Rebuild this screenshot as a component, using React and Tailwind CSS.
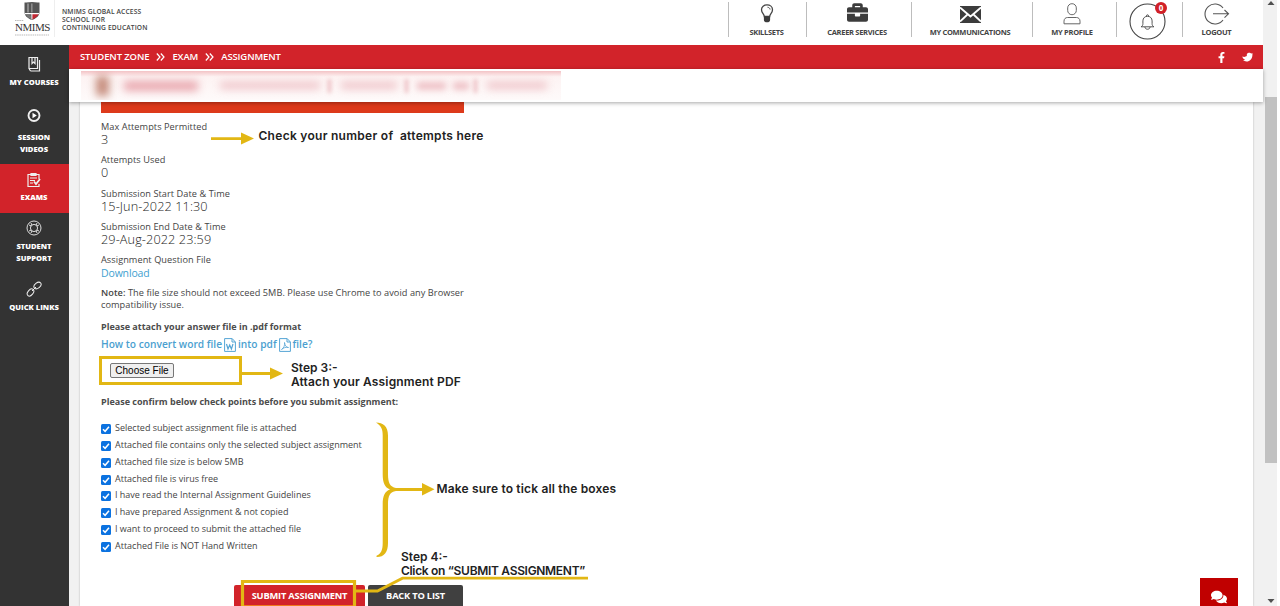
import React from "react";
import { FaBriefcase, FaFacebookF, FaComments } from "react-icons/fa";

const sans = "font-['Open_Sans','Liberation_Sans',sans-serif]";

function Crest() {
  return (
    <svg width="38" height="37" viewBox="0 0 38 37" className="block">
      <path d="M10.5 2.5c2.4.3 4.700-.1 7.500-.4 2.800.3 5 .7 7.500.4v9.500c0 4-3.500 6.500-7.500 8-4-1.500-7.500-4-7.500-8z" fill="#555" />
      <path d="M13 3.500h2v9h-2zM17 3.500h1.600v9H17z" fill="#8b8b8b" />
      <path d="M18 14h6.500c-.8 2.500-3.300 4.300-6.500 5.400z" fill="#c22732" />
      <path d="M11 13h14v1.200H11zM17.400 13h1v6.500h-1z" fill="#fff" />
      <path d="M12 14.500l5 1v3.500c-2.500-1-4.300-2.500-5-4.500z" fill="#777" />
      <path d="M1 20.500h9" stroke="#bbb" strokeWidth="1" strokeDasharray="1.500 .7" />
      <path d="M1 35h34" stroke="#bbb" strokeWidth="1" strokeDasharray="1.500 .7" />
    </svg>
  );
}

function BulbIcon() {
  return (
    <svg width="14" height="19" viewBox="0 0 14 19" fill="none">
      <path d="M4.300 12.500C4.300 10 1.500 9 1.500 5.700 1.500 2.800 4 .9 7 .9s5.500 1.900 5.500 4.800c0 3.300-2.800 4.300-2.800 6.800z" stroke="#444" strokeWidth="1.300" />
      <path d="M7.500 3.200c1.500.2 2.400 1 2.600 2.300" stroke="#444" strokeWidth="1" />
      <path d="M3.900 12.500h6.200v3.400c0 1.200-1.300 2.400-3.100 2.400s-3.100-1.200-3.100-2.400z" fill="#3c3c3c" />
    </svg>
  );
}

function MailIcon() {
  return (
    <svg width="21" height="17" viewBox="0 0 21 17" className="mt-[2px]">
      <path d="M0 0h21v17H0z" fill="#3c3c3c" />
      <path d="M0 1.500l10.500 9L21 1.500M0 15.500l7.500-7M21 15.500l-7.500-7" stroke="#fff" strokeWidth="1.800" fill="none" />
    </svg>
  );
}

function PersonIcon() {
  return (
    <svg width="18" height="22" viewBox="0 0 18 22" fill="none" stroke="#666" strokeWidth="1">
      <rect x="4.700" y=".7" width="8.600" height="11" rx="4.200" />
      <path d="M1 20.800v-2.600c0-2.400 1.600-3.700 3.600-3.700h8.800c2 0 3.600 1.300 3.600 3.700v2.600z" />
    </svg>
  );
}

function BellIcon() {
  return (
    <svg width="38" height="38" viewBox="0 0 38 38" fill="none" stroke="#555" strokeWidth="1">
      <circle cx="18.500" cy="19.500" r="17.500" stroke="#444" strokeWidth="1.100" />
      <path d="M12 24.800c1.500-.8 1.900-1.600 1.900-3.300v-2.600c0-2.800 1.900-4.600 4.600-4.600s4.600 1.800 4.600 4.600v2.600c0 1.700.4 2.500 1.900 3.300zM17.300 14.300c0-2 2.400-2 2.400 0M15.900 25c.3 3 4.900 3 5.200 0" />
    </svg>
  );
}

function LogoutIcon() {
  return (
    <svg width="26" height="22" viewBox="0 0 26 22" fill="none" stroke="#555" strokeWidth="1.100">
      <path d="M19 5A10 10 0 1 0 19 17M9 10.800h15.500M20.500 7l4 3.800-4 3.800" />
    </svg>
  );
}

function NavItem({ label, className, children }) {
  return (
    <div className={"flex h-[35px] shrink-0 flex-col items-center border-l border-[#bdbdbd] " + className}>
      <div className="flex h-[23px] shrink-0 items-center justify-center">{children}</div>
      <div className="shrink-0 whitespace-nowrap text-[7.500px] font-bold leading-[15px] tracking-[-0.300px] text-[#444]">{label}</div>
    </div>
  );
}

function Header() {
  return (
    <header className="flex h-[45px] shrink-0 justify-between bg-white">
      <div className="flex">
        <div className="relative ml-[14px] h-[37px] w-[41px] border-r border-[#eee]">
          <Crest />
          <span className="absolute left-[1px] top-[20px] font-['Liberation_Serif',serif] text-[11px] leading-[14px] tracking-[-0.500px] text-[#333]">NMIMS</span>
        </div>
        <div className="ml-[7px] mt-[8px] whitespace-nowrap text-[6.700px] font-semibold leading-[8.100px] tracking-[0.120px] text-[#444]">
          NMIMS GLOBAL ACCESS<br />SCHOOL FOR<br />CONTINUING EDUCATION
        </div>
      </div>
      <nav className="mt-[2px] flex">
        <NavItem label="SKILLSETS" className="w-[78px] pr-[2px]"><BulbIcon /></NavItem>
        <NavItem label="CAREER SERVICES" className="w-[105px] pr-[4px]"><FaBriefcase className="mb-[2px] h-[21px] w-[21px] text-[#3c3c3c]" /></NavItem>
        <NavItem label="MY COMMUNICATIONS" className="w-[121px] pr-[4px]"><MailIcon /></NavItem>
        <NavItem label="MY PROFILE" className="w-[84px] pr-[5px]"><PersonIcon /></NavItem>
        <div className="relative h-[35px] w-[66px] border-l border-[#bdbdbd] pl-[12px]">
          <BellIcon />
          <span className="absolute left-[38px] top-[0px] flex h-[12px] w-[12px] items-center justify-center rounded-full bg-[#d12027] text-[8px] font-bold leading-none text-white">0</span>
        </div>
        <NavItem label="LOGOUT" className="w-[81px] pr-[13px]"><LogoutIcon /></NavItem>
      </nav>
    </header>
  );
}

const stroke = { fill: "none", stroke: "#eee", strokeWidth: 1.2 };

function SideItem({ icon, lines, className }) {
  return (
    <div className={"flex flex-col items-center pr-[1px] " + className}>
      <svg width="16" height="16" viewBox="0 0 16 16" {...stroke}>{icon}</svg>
      <div className="whitespace-nowrap text-center text-[7.600px] font-extrabold leading-[11.500px] text-white">
        {lines.map((l) => <div key={l}>{l}</div>)}
      </div>
    </div>
  );
}

function Sidebar() {
  return (
    <aside className="flex w-[69px] shrink-0 flex-col bg-[#333]">
      <SideItem className="h-[60px] gap-[5px] pt-[11px]" lines={["MY COURSES"]} icon={<><path d="M3 1.500h8.500v11H3zM4.500 15h9V4M3 12.500L4.500 15" /><path d="M6 1.500v6l1.500-1.500L9 7.500v-6" /></>} />
      <SideItem className="h-[59px] gap-[9px] pt-[2px]" lines={["SESSION", "VIDEOS"]} icon={<><circle cx="8" cy="8.500" r="5.500" strokeWidth="1.900" /><path d="M6.500 5.700l4.300 2.800-4.300 2.800z" fill="#fff" stroke="none" /></>} />
      <SideItem className="h-[48.500px] gap-[4px] bg-[#d2232a] pt-[8px]" lines={["EXAMS"]} icon={<><path d="M13 7V2.500H2v12h11V12M5 1.500h5v2H5zM4 6h7M4 8.500h5M4 11h3" /><path d="M8 9.500l2 2.500 4-5" strokeWidth="1.800" /></>} />
      <SideItem className="h-[60px] gap-[5px] pt-[7.500px]" lines={["STUDENT", "SUPPORT"]} icon={<><circle cx="8" cy="8" r="7" strokeWidth=".9" /><circle cx="8" cy="8" r="3.600" strokeWidth=".9" /><path d="M3 5l2.200 1M5 3l1 2.200M13 5l-2.200 1M11 3l-1 2.200M3 11l2.200-1M5 13l1-2.200M13 11l-2.200-1M11 13l-1-2.200" strokeWidth=".9" /></>} />
      <SideItem className="gap-[5px] pt-[8.500px]" lines={["QUICK LINKS"]} icon={<g strokeWidth="1"><ellipse cx="11.500" cy="4.500" rx="4" ry="2.600" transform="rotate(-38 11.500 4.500)" /><ellipse cx="4.500" cy="11.500" rx="4" ry="2.600" transform="rotate(-50 4.500 11.500)" /><path d="M6 10l4-4" /></g>} />
    </aside>
  );
}

function Chevrons() {
  return (
    <svg width="9" height="8" viewBox="0 0 9 8" fill="none" stroke="#fff" strokeWidth="1.200">
      <path d="M.8.500L4 4 .8 7.500M4.800.500L8 4 4.800 7.500" />
    </svg>
  );
}

function Breadcrumbs() {
  return (
    <div className="flex h-[24px] shrink-0 items-center justify-between bg-[#d2232a] pl-[11px] pr-[10px] text-[9.500px] font-semibold text-white">
      <div className="flex items-center gap-[7px] whitespace-nowrap tracking-[-0.120px]">
        <span>STUDENT ZONE</span><Chevrons /><span>EXAM</span><Chevrons /><span>ASSIGNMENT</span>
      </div>
      <div className="flex items-center gap-[17px]">
        <FaFacebookF className="h-[11px] w-[7px]" />
        <svg width="11" height="10" viewBox="0 0 12 10" fill="#fff">
          <path d="M.3 4.500c2 .8 3.800.3 5-.5-.5-2 .5-3.500 2.200-3.700 1.300-.1 2 .4 2.400.8l1.600-.3-.2 2.700C10.900 7 8.600 9.800 5 9.800c-1.800 0-3-.5-3.800-1.300 1 0 1.500-.2 2-.6C1.700 7.300.7 6.200.3 4.500z" />
        </svg>
      </div>
    </div>
  );
}

function ProfileStrip() {
  return (
    <div className="z-10 flex h-[33px] shrink-0 bg-white pl-[12px] pt-[2px] shadow-[0_1px_4px_rgba(0,0,0,0.35)]">
      <div className="flex h-[29px] w-[480px] items-center overflow-hidden bg-linear-to-b from-[#f3c3c6] from-0% via-[#fdf3f3] via-20% to-[#fefafa]">
        <div className="ml-[15px] h-[20px] w-[13px] bg-[#b8735f] opacity-80 blur-[4px]" />
        <div className="ml-[15px] h-[10px] w-[74px] bg-[#dc7480] opacity-60 blur-[4px]" />
        <div className="ml-[22px] h-[7px] w-[100px] bg-[#e5a0a8] opacity-60 blur-[4px]" />
        <div className="ml-[8px] h-[14px] w-[3px] bg-[#dc8890] opacity-60 blur-[2px]" />
        <div className="ml-[10px] h-[7px] w-[56px] bg-[#e5a0a8] opacity-60 blur-[4px]" />
        <div className="ml-[8px] h-[14px] w-[3px] bg-[#dc8890] opacity-60 blur-[2px]" />
        <div className="ml-[9px] h-[8px] w-[29px] bg-[#e5a0a8] opacity-60 blur-[3px]" />
        <div className="ml-[7px] h-[8px] w-[16px] bg-[#e5a0a8] opacity-60 blur-[3px]" />
        <div className="ml-[5px] h-[14px] w-[3px] bg-[#dc8890] opacity-60 blur-[2px]" />
        <div className="ml-[10px] h-[7px] w-[60px] bg-[#e5a0a8] opacity-60 blur-[4px]" />
      </div>
    </div>
  );
}

function Field({ label, value, link }) {
  return (
    <div className="h-[33.300px] whitespace-nowrap">
      <div className="text-[9.200px] font-medium leading-[13px] tracking-[0.060px] text-[#444]">{label}</div>
      <div className={link ? "text-[10.500px] leading-[14px] tracking-[-0.150px] text-[#3f9fd0]" : "text-[12.700px] font-light leading-[13.500px] tracking-[0.100px] text-[#222]"}>{value}</div>
    </div>
  );
}

function DocIcon({ children }) {
  return (
    <svg width="12" height="14" viewBox="0 0 12 14" fill="none" stroke="#55a5d5" strokeWidth="1">
      <path d="M.6.600h7.600L11.400 4v9.400H.6zM8 .8V4h3.200" />
      {children}
    </svg>
  );
}

const checks = [
  "Selected subject assignment file is attached",
  "Attached file contains only the selected subject assignment",
  "Attached file size is below 5MB",
  "Attached file is virus free",
  "I have read the Internal Assignment Guidelines",
  "I have prepared Assignment & not copied",
  "I want to proceed to submit the attached file",
  "Attached File is NOT Hand Written",
];

function AssignmentForm() {
  return (
    <section className="ml-[21px] flex w-[363px] flex-col">
      <div className="h-[11px] shrink-0 bg-[#dd3a1b]" />
      <div className="mt-[7px]">
        <Field label="Max Attempts Permitted" value="3" />
        <Field label="Attempts Used" value="0" />
        <Field label="Submission Start Date & Time" value="15-Jun-2022 11:30" />
        <Field label="Submission End Date & Time" value="29-Aug-2022 23:59" />
        <Field label="Assignment Question File" value="Download" link />
      </div>
      <p className="mt-[0.500px] whitespace-nowrap text-[9.200px] font-medium leading-[12px] tracking-[0.055px] text-[#444]">
        <b className="font-semibold">Note:</b> The file size should not exceed 5MB. Please use Chrome to avoid any Browser<br />compatibility issue.
      </p>
      <p className="mt-[9px] whitespace-nowrap text-[9.020px] font-bold leading-[13px] text-[#4c4c4c]">Please attach your answer file in .pdf format</p>
      <p className="mt-[4px] flex h-[16px] items-center gap-[2px] whitespace-nowrap text-[10.200px] font-semibold text-[#4b9fd0]">
        <span>How to convert word file</span>
        <DocIcon><path d="M2.500 6l1.500 5 1.700-4 1.700 4L9 6" strokeWidth="1.200" /></DocIcon>
        <span>into pdf</span>
        <DocIcon><path d="M2.500 11.500C5 10 6 7 5.500 4.500 6 8 7.500 9.500 9.500 9.500 7 8.800 4.500 9.800 2.500 11.500z" strokeWidth=".8" /></DocIcon>
        <span>file?</span>
      </p>
      <div className="-ml-[2px] mt-[3px] flex h-[29px] w-[143px] shrink-0 items-center border-[3px] border-[#e2b714] pl-[8px]">
        <button className="h-[15px] w-[64px] whitespace-nowrap rounded-[2px] border border-[#777] bg-[#efefef] pt-[1px] font-['Liberation_Sans',sans-serif] text-[10px] leading-[12px] text-black">Choose File</button>
      </div>
      <p className="mt-[10px] whitespace-nowrap text-[9.020px] font-bold leading-[13px] text-[#4c4c4c]">Please confirm below check points before you submit assignment:</p>
      <ul className="mt-[11px]">
        {checks.map((c) => (
          <li key={c} className="flex h-[16.850px] gap-[4px] whitespace-nowrap text-[9px] leading-[17px] text-[#444]">
            <svg width="10" height="10" viewBox="0 0 10 10" className="mt-[5px] shrink-0">
              <rect width="10" height="10" rx="1.500" fill="#0b72e0" />
              <path d="M2 5.200l2.100 2.100L8 2.700" fill="none" stroke="#fff" strokeWidth="1.500" />
            </svg>
            <span>{c}</span>
          </li>
        ))}
      </ul>
      <div className="ml-[133px] mt-[31.500px] flex gap-[3px] whitespace-nowrap text-[9.300px] font-bold leading-[20px] tracking-[-0.200px] text-white">
        <button className="h-[24px] w-[131px] rounded-t-[2px] bg-[#d2232a] pb-[3px]">SUBMIT ASSIGNMENT</button>
        <button className="h-[24px] w-[95px] shrink-0 rounded-t-[2px] bg-[#404040] pb-[3px]">BACK TO LIST</button>
      </div>
    </section>
  );
}

function Note({ className, children }) {
  return (
    <div className={"absolute whitespace-nowrap font-['Inter','Open_Sans',sans-serif] text-[12px] font-semibold leading-[14px] text-[#222] " + className}>{children}</div>
  );
}

function Annotations() {
  return (
    <div className="pointer-events-none absolute inset-0 z-20 overflow-hidden">
      <svg width="1280" height="606" viewBox="0 0 1280 606" fill="#e2b714" className="block">
        <path d="M211 137.200h30v-4.700l13 6-13 6v-4.600h-30zM241 371.900h29v-4.400l13 6-13 6v-4.500h-29z" />
        <path d="M376 422.500c7 .3 12 3.500 12 13v39c0 8 2 12.600 8 13.400h26v-4.900l12.500 6.300-12.500 6.300V491h-26c-6 .8-8 5-8 13v39c0 9.500-4 14-11 14-.8-.5-.8-1.200 0-1.500 4-1.800 5.700-5.500 5.700-12.500v-39c0-8 2-12.500 7.300-14.500-5.300-2-7.300-7-7.300-15v-39c0-7-1.700-9.600-6.700-13z" />
        <path d="M242.500 608v-26.500h112V608" fill="none" stroke="#e2b714" strokeWidth="3.200" />
        <path d="M356 591h21.500l25-12.800H588" fill="none" stroke="#e2b714" strokeWidth="2.800" />
        <path d="M244 605.500h109" stroke="#f07c1e" strokeWidth="1" />
      </svg>
      <Note className="left-[258.500px] top-[129px] whitespace-pre tracking-[0.280px]">{"Check your number of  attempts here"}</Note>
      <Note className="left-[291px] top-[361px]"><span>Step 3:-</span><br /><span className="tracking-[0.160px]">Attach your Assignment PDF</span></Note>
      <Note className="left-[436.500px] top-[482px] tracking-[0.170px]">Make sure to tick all the boxes</Note>
      <Note className="left-[401px] top-[550px]"><span>Step 4:-</span><br /><span className="tracking-[-0.310px]">Click on “SUBMIT ASSIGNMENT”</span></Note>
    </div>
  );
}

function Scrollbar() {
  return (
    <div className="flex h-full w-[14px] shrink-0 flex-col bg-[#f1f1f1] pl-[2px]">
      <svg width="12" height="97" viewBox="0 0 12 97" className="shrink-0"><path d="M2.500 5L6 1l3.500 4z" fill="#505050" /></svg>
      <div className="h-[366px] w-[12px] shrink-0 bg-[#c1c1c1]" />
      <svg width="12" height="143" viewBox="0 0 12 143" className="shrink-0"><path d="M2.500 136h7L6 140z" fill="#505050" /></svg>
    </div>
  );
}

export default function App() {
  return (
    <div className={"relative flex h-[606px] w-[1280px] overflow-hidden bg-white " + sans}>
      <div className="flex w-[1263px] shrink-0 flex-col">
        <Header />
        <div className="flex min-h-0 flex-1">
          <Sidebar />
          <main className="flex min-w-0 flex-1 flex-col">
            <Breadcrumbs />
            <ProfileStrip />
            <div className="flex min-h-0 flex-1 overflow-hidden bg-[#f1f1f1] pl-[11px] pr-[10px]">
              <div className="flex flex-1 items-start justify-between bg-white shadow-[0_0_2px_rgba(0,0,0,0.25)]">
                <AssignmentForm />
                <button className="mr-[15px] mt-[476px] flex h-[38px] w-[38px] items-center justify-center bg-[#c00000]">
                  <FaComments className="h-[16px] w-[16px] text-white" />
                </button>
              </div>
            </div>
          </main>
        </div>
      </div>
      <Scrollbar />
      <Annotations />
    </div>
  );
}
